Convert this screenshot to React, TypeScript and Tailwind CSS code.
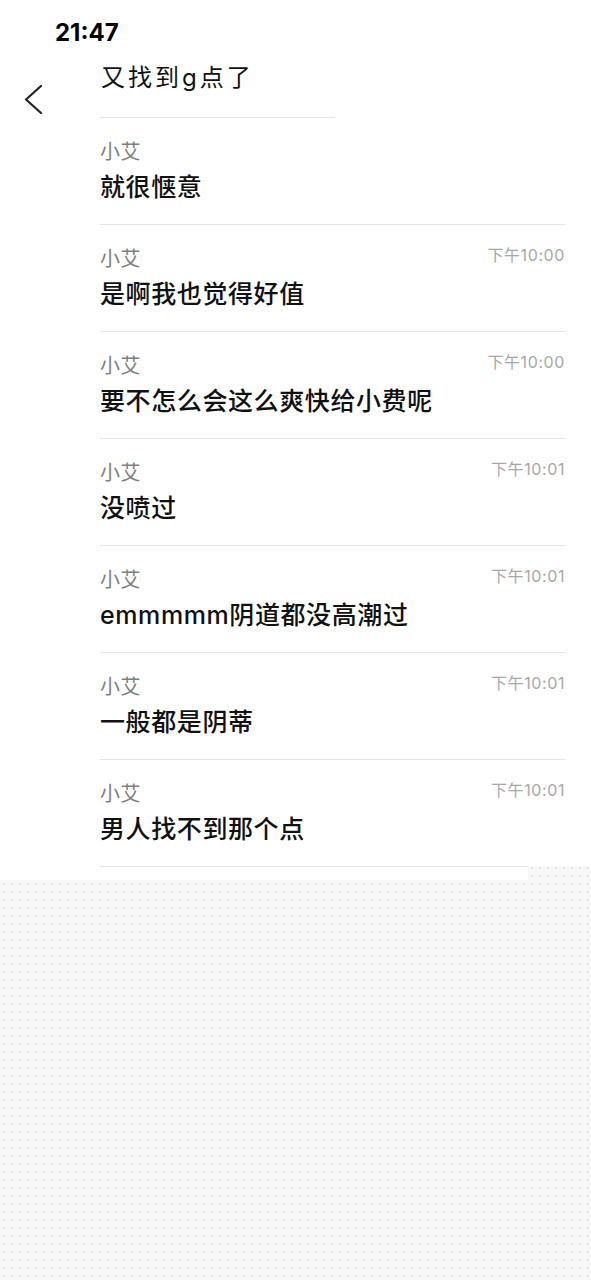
const msgs = [
  { text: '就很惬意', time: '' },
  { text: '是啊我也觉得好值', time: '下午10:00' },
  { text: '要不怎么会这么爽快给小费呢', time: '下午10:00' },
  { text: '没喷过', time: '下午10:01' },
  { text: 'emmmmm阴道都没高潮过', time: '下午10:01' },
  { text: '一般都是阴蒂', time: '下午10:01' },
  { text: '男人找不到那个点', time: '下午10:01' },
];

const font = "font-['Inter','Noto_Sans_CJK_SC',sans-serif]";

const Row = ({ text, time, last }: { text: string; time: string; last?: boolean }) => {
  return (
    <div
      className={
        last
          ? 'ml-[100px] mr-[26px] h-[106px] pt-[22px]'
          : 'ml-[100px] mr-[26px] h-[107px] border-b border-[#e6e6e6] pt-[22px]'
      }
    >
      <div className="flex justify-between">
        <span className="text-[20px] leading-[24px] tracking-[0.5px] text-[#808080]">小艾</span>
        {time && (
          <span className="-mt-[2px] text-[16px] leading-[20px] tracking-[0.6px] text-[#a8a8a8]">
            {time}
          </span>
        )}
      </div>
      <div className="mt-[6px] text-[25px] font-medium leading-[34px] tracking-[0.6px] text-[#111]">
        {text}
      </div>
    </div>
  );
};

export default function App() {
  return (
    <div
      className={`min-h-screen bg-[#f7f7f7] bg-[radial-gradient(circle,#e6e6e6_1px,transparent_1.3px)] bg-[length:8px_8px] ${font}`}
    >
      <div className="bg-white">
        {/* status bar */}
        <div className="h-[58px] pl-[55px] pt-[19px] text-[24px] font-bold leading-[28px] text-black">
          21:47
        </div>

        {/* header */}
        <div className="flex h-[60px]">
          <div className="w-[100px]">
            <svg
              className="ml-[24px] mt-[27px]"
              width="19"
              height="29"
              viewBox="0 0 19 29"
              fill="none"
            >
              <polyline
                points="17,1 2,14.5 17,28"
                stroke="#222"
                strokeWidth="2.2"
                strokeLinecap="round"
                strokeLinejoin="round"
              />
            </svg>
          </div>
          <div className="w-[235px] border-b border-[#e6e6e6] pt-[4px] pl-[1px] text-[24px] leading-[32px] tracking-[3px] text-[#111]">
            又找到g点了
          </div>
        </div>

        {msgs.map((m, i) => (
          <Row key={i} text={m.text} time={m.time} last={i === msgs.length - 1} />
        ))}
      </div>

      {/* torn edge strip */}
      <div className="flex h-[14px]">
        <div className="w-[528px] bg-white">
          <div className="ml-[100px] border-t border-[#e6e6e6]" />
        </div>
        <div className="flex-1" />
      </div>
    </div>
  );
}
